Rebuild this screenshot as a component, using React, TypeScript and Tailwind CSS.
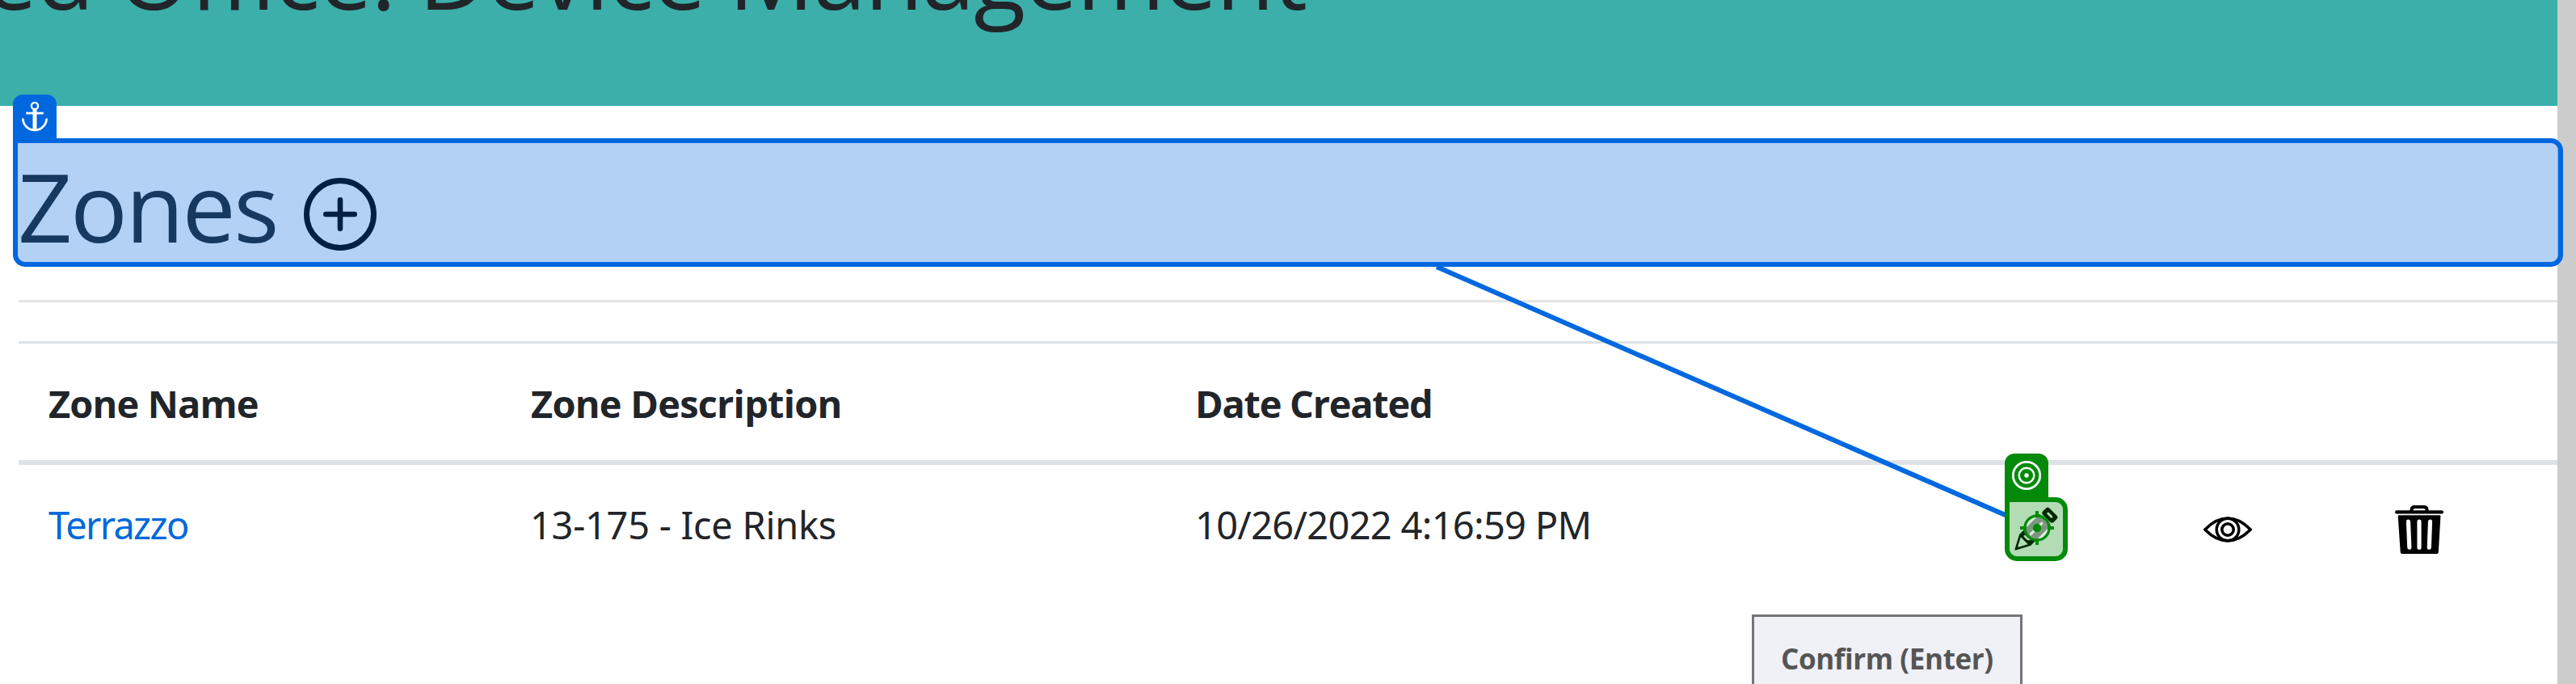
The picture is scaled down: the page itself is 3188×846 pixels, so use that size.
const headers = [
  { label: "Zone Name", style: "pl-[37px] tracking-[-0.9px]" },
  { label: "Zone Description", style: "pl-[37px] tracking-[-0.8px]" },
  { label: "Date Created", style: "pl-[36px] tracking-[-1.3px]" },
];

function PlusCircleIcon() {
  return (
    <svg className="h-[90px] w-[90px]" viewBox="0 0 90 90" fill="none" stroke="#000" strokeLinecap="round">
      <circle cx="45" cy="45" r="41.5" strokeWidth="7" />
      <path d="M27.3 45H62.7M45 27.3V62.7" strokeWidth="6.6" />
    </svg>
  );
}

function PencilIcon() {
  return (
    <svg className="h-[60px] w-[60px]" viewBox="0 0 60 60">
      <g transform="translate(0.5 56.5) rotate(-45)">
        <path d="M2 0L18 -8.5V8.5Z" fill="none" stroke="#000" strokeWidth="2.6" strokeLinejoin="round" />
        <path d="M0 0L6 -3V3Z" fill="#000" />
        <path d="M18 -9.8H53V9.8H18Z" fill="#000" />
        <path d="M21 -3.6V0.5Q21 3.5 25 3.5" fill="none" stroke="#fff" strokeWidth="2.6" strokeLinecap="round" />
        <path d="M28 0H47" stroke="#fff" strokeWidth="3.2" strokeLinecap="round" />
        <rect x="55.5" y="-9.5" width="11.5" height="19" rx="3.2" fill="#000" />
        <path d="M61.2 -3V3" stroke="#fff" strokeWidth="2.8" strokeLinecap="round" />
      </g>
    </svg>
  );
}

function EyeIcon() {
  return (
    <svg className="h-[60px] w-[60px]" viewBox="0 0 60 60" fill="none" stroke="#000" strokeLinejoin="round">
      <path d="M1.8 30C11 20.4 20.5 16 30 16S49 20.4 58.2 30C49 39.400 39.5 43.8 30 43.8S11 39.4 1.8 30Z" strokeWidth="3.6" />
      <circle cx="30" cy="30" r="13.8" strokeWidth="3.5" />
      <circle cx="30" cy="30" r="7.2" strokeWidth="3.6" />
    </svg>
  );
}

function TrashIcon() {
  return (
    <svg className="h-[60px] w-[60px]" viewBox="0 0 60 60">
      <path d="M20.5 8V5.5C20.5 3 22 2 24.5 2H35.5C38 2 39.5 3 39.5 5.5V8" fill="none" stroke="#000" strokeWidth="4" />
      <rect x="0" y="6.3" width="60" height="4.2" rx="2.1" />
      <path d="M4.5 12.3H55.5Q56.5 12.3 56.4 13.4L53.8 58Q53.6 60 51.7 60H8.8Q6.9 60 6.7 58L3.7 13.4Q3.6 12.3 4.5 12.3Z" />
      <path d="M16.5 20L17.8 52.2M30 20V52.2M43.5 20L42.3 52.2" stroke="#fff" strokeWidth="5.2" strokeLinecap="round" />
    </svg>
  );
}

function AnchorIcon() {
  return (
    <svg className="h-[38px] w-[34px]" viewBox="0 0 34 38" fill="none" stroke="#fff">
      <circle cx="17" cy="6" r="4.1" strokeWidth="2.4" />
      <path d="M17 10V36" strokeWidth="5" />
      <path d="M6.2 15H27.8" strokeWidth="2.8" />
      <path d="M2.3 21.5C2.5 29.5 9 36 17 36S31.5 29.5 31.7 21.5" strokeWidth="2.7" />
    </svg>
  );
}

function TargetIcon() {
  return (
    <svg className="h-[38px] w-[38px]" viewBox="0 0 38 38" fill="none" stroke="#fff">
      <circle cx="19" cy="19" r="16.7" strokeWidth="2.8" />
      <circle cx="19" cy="19" r="9.3" strokeWidth="2.4" />
      <circle cx="19" cy="19" r="2.7" fill="#fff" stroke="none" />
    </svg>
  );
}

function Crosshair() {
  return (
    <svg className="mb-[4px] h-[42px] w-[42px]" viewBox="0 0 42 42" fill="none" stroke="#038a0a">
      <circle cx="21" cy="21" r="15" fill="#fff" fillOpacity="0.5" strokeWidth="3.4" />
      <path d="M0 21H8M34 21H42M21 0V8M21 34V42" strokeWidth="4" />
      <circle cx="21" cy="21" r="5.2" fill="#038a0a" stroke="none" />
    </svg>
  );
}

export default function App() {
  return (
    <div className="relative flex h-[846px] w-[3188px] overflow-hidden bg-white font-['Open_Sans','Noto_Sans',sans-serif] text-[#212529]">
      <main className="flex w-[3165px] flex-col">
        <header className="h-[131px] shrink-0 overflow-hidden bg-[#3cafaa]">
          <h1 className="-mt-[83px] -ml-[20px] text-[118px] leading-[100px] tracking-[-1.5px] whitespace-nowrap">
            ed Office: Device Management
          </h1>
        </header>

        <section className="flex flex-col pl-[23px]">
          <div className="mt-[40px] flex h-[160px] items-start pt-[12px]">
            <h2 className="-ml-[1px] w-[354px] text-[118px] leading-[144px] tracking-[-2.5px]">Zones</h2>
            <button className="mt-[37px]" aria-label="Add zone">
              <PlusCircleIcon />
            </button>
          </div>
          <hr className="mt-[40px] border-0 border-t-[3px] border-[#e5e5e5]" />

          <div className="mt-[48px] border-t-[3px] border-[#dee2e6]">
            <div className="grid h-[150px] grid-cols-[597px_823px_1fr] items-center border-b-[6px] border-[#dee2e6] pt-[3px] text-[47px] leading-[72px] font-bold">
              {headers.map((h) => (
                <div key={h.label} className={h.style}>
                  {h.label}
                </div>
              ))}
            </div>
            <div className="grid grid-cols-[597px_823px_967px_237px_237px_1fr] pt-[38px] font-['Noto_Sans',sans-serif] text-[47px] leading-[72px]">
              <a className="pl-[37px] tracking-[-1.7px] text-[#0069d9]">Terrazzo</a>
              <div className="pl-[36px] tracking-[-0.3px]">13-175 - Ice Rinks</div>
              <div className="pl-[36px] tracking-[-0.7px]">10/26/2022 4:16:59 PM</div>
              <div className="pt-[11px] pl-[83px]">
                <PencilIcon />
              </div>
              <div className="pt-[12px] pl-[80px]">
                <EyeIcon />
              </div>
              <div className="pt-[12px] pl-[80px]">
                <TrashIcon />
              </div>
            </div>
          </div>
        </section>
      </main>
      <aside className="w-[23px] bg-[#cccccc]" />

      <svg className="absolute top-0 left-0 h-[846px] w-[3188px]" viewBox="0 0 3188 846">
        <path d="M1778 330L2484 638" stroke="#0069df" strokeWidth="6" />
      </svg>

      <div className="absolute top-[117px] left-[16px] flex h-[54px] w-[54px] justify-center rounded-t-[12px] bg-[#0067df] pt-[8px]">
        <AnchorIcon />
      </div>
      <div className="absolute top-[171px] left-[16px] h-[159px] w-[3156px] rounded-[15px] rounded-tl-none border-[6px] border-[#0067df]">
        <div className="h-full w-full rounded-[9px] rounded-tl-none bg-[#0067df]/30" />
      </div>

      <div className="absolute top-[561px] left-[2481px] flex h-[54px] w-[54px] justify-center rounded-t-[12px] bg-[#038a0a] pt-[8px]">
        <TargetIcon />
      </div>
      <div className="absolute top-[615px] left-[2481px] flex h-[79px] w-[78px] items-center justify-center rounded-[15px] rounded-tl-none border-[6px] border-[#038a0a]">
        <div className="flex h-full w-full items-center justify-center rounded-[9px] rounded-tl-none bg-[#038a0a]/30 pl-[2px]">
          <Crosshair />
        </div>
      </div>

      <div className="absolute top-[760px] left-[2168px] h-[110px] w-[335px] border-[3px] border-[#767676] bg-[#f0f0f7] pt-[28px] pl-[33px] text-[35px] leading-[48px] font-bold tracking-[-0.4px] whitespace-nowrap text-[#555555]">
        Confirm (Enter)
      </div>
    </div>
  );
}
